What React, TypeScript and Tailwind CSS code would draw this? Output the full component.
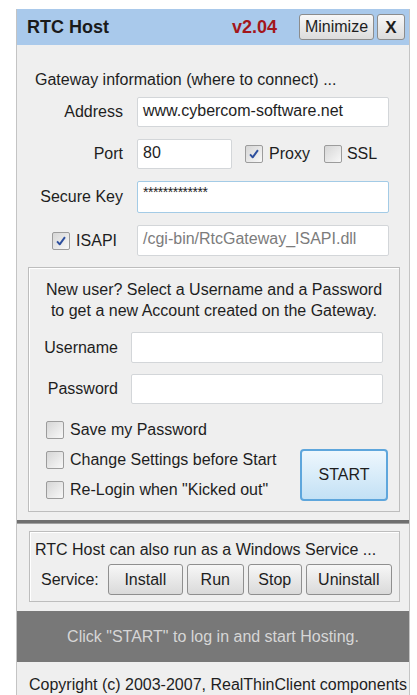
import React from "react";

const ui = "font-['Liberation_Sans',Arial,sans-serif]";

function CheckBox({ checked = false }: { checked?: boolean }) {
  return (
    <span className="flex h-[18px] w-[18px] shrink-0 items-center justify-center rounded-[2px] border border-[#9c9c9c] bg-linear-to-br from-[#d6d6d6] to-[#f8f8f8]">
      {checked && (
        <svg viewBox="0 0 16 16" className="h-[14px] w-[14px]">
          <path
            d="M3.5 8.5 6.5 11.8 12.5 3.5"
            fill="none"
            stroke="#2d4f9e"
            strokeWidth="2.2"
            strokeLinejoin="round"
          />
        </svg>
      )}
    </span>
  );
}

function Field({
  w = "w-[252px]",
  h = "h-[30px]",
  focus = false,
  muted = false,
  children,
}: {
  w?: string;
  h?: string;
  focus?: boolean;
  muted?: boolean;
  children?: React.ReactNode;
}) {
  return (
    <div
      className={`${w} ${h} flex shrink-0 items-center rounded-[2px] border bg-white px-[5px] pb-[3px] text-[16px] ${
        focus ? "border-[#a3cbe6]" : "border-[#d3d6d9]"
      } ${muted ? "text-[#7c7c7c]" : "text-[#1e1e1e]"}`}
    >
      {children}
    </div>
  );
}

function Btn({ w, children }: { w: string; children: React.ReactNode }) {
  return (
    <button
      className={`${w} h-[31px] shrink-0 rounded-[3px] border border-[#8f8f8f] bg-linear-to-b from-[#f7f7f7] to-[#dadada] text-[16px] text-[#1e1e1e]`}
    >
      {children}
    </button>
  );
}

function Row({ label, children }: { label: React.ReactNode; children: React.ReactNode }) {
  return (
    <div className="flex items-center">
      <div className="flex w-[106px] justify-end">{label}</div>
      <div className="ml-[14px] flex items-center">{children}</div>
    </div>
  );
}

export default function App() {
  return (
    <div className={`min-h-screen bg-white pt-[9px] ${ui} text-[#1e1e1e]`}>
      <div className="ml-[16px] w-[394px] border-x border-[#c4c4c4] bg-[#efefef] pb-[2px]">
        {/* title bar */}
        <div className="flex h-[36px] items-center bg-[#a9c9eb] pl-[10px] pr-[4px]">
          <span className="flex-1 text-[18px] font-bold text-[#1a1a1a]">RTC Host</span>
          <span className="mr-[22px] text-[18px] font-bold text-[#a3161b]">v2.04</span>
          <button className="h-[26px] w-[75px] rounded-[3px] border border-[#8c8c8c] bg-linear-to-b from-[#f8f8f8] to-[#dcdcdc] text-[16px]">
            Minimize
          </button>
          <button className="ml-[3px] h-[26px] w-[28px] rounded-[3px] border border-[#8c8c8c] bg-linear-to-b from-[#f8f8f8] to-[#dcdcdc] text-[17px] font-bold">
            X
          </button>
        </div>

        {/* gateway settings */}
        <div className="mt-[25px] pl-[18px] text-[16px] leading-[20px]">
          Gateway information (where to connect) ...
        </div>
        <div className="mt-[7px] flex flex-col gap-[12px] text-[16px]">
          <Row label="Address">
            <Field>www.cybercom-software.net</Field>
          </Row>
          <Row label="Port">
            <Field w="w-[95px]">80</Field>
            <span className="ml-[13px]">
              <CheckBox checked />
            </span>
            <span className="ml-[6px]">Proxy</span>
            <span className="ml-[14px]">
              <CheckBox />
            </span>
            <span className="ml-[5px]">SSL</span>
          </Row>
          <Row label="Secure Key">
            <Field h="h-[32px]" focus>
              <span className="-mt-[6px] text-[14px] tracking-[-0.5px]">*************</span>
            </Field>
          </Row>
          <Row
            label={
              <span className="flex items-center gap-[6px] pr-[6px]">
                <CheckBox checked />
                ISAPI
              </span>
            }
          >
            <Field h="h-[31px]" muted>
              /cgi-bin/RtcGateway_ISAPI.dll
            </Field>
          </Row>
        </div>

        {/* account group */}
        <div className="ml-[11px] mr-[9px] mt-[11px] border border-[#bdbdbd] pb-[6px] shadow-[inset_1px_1px_0_#ffffff]">
          <div className="pt-[11px] text-center text-[16px] leading-[21px]">
            <div>New user? Select a Username and a Password</div>
            <div>to get a new Account created on the Gateway.</div>
          </div>
          <div className="mt-[11px] flex flex-col gap-[11px] text-[16px]">
            <div className="flex items-center">
              <div className="w-[89px] text-right">Username</div>
              <div className="ml-[13px]">
                <Field h="h-[31px]" />
              </div>
            </div>
            <div className="flex items-center">
              <div className="w-[89px] text-right">Password</div>
              <div className="ml-[13px]">
                <Field />
              </div>
            </div>
          </div>
          <div className="mt-[11px] flex items-start">
            <div className="ml-[17px] flex flex-1 flex-col text-[16px]">
              {["Save my Password", "Change Settings before Start", 'Re-Login when "Kicked out"'].map(
                (t) => (
                  <div key={t} className="flex h-[30px] items-center gap-[6px]">
                    <CheckBox />
                    <span>{t}</span>
                  </div>
                )
              )}
            </div>
            <button className="mr-[11px] mt-[34px] h-[52px] w-[88px] rounded-[4px] border-2 border-[#5ea6dc] bg-linear-to-b from-[#eef7fd] to-[#c3e1f5] text-[16px]">
              START
            </button>
          </div>
        </div>

        {/* divider */}
        <div className="mt-[8px] h-[4px] border-b border-[#a0a0a0] bg-[#6f6f6f]" />

        {/* service group */}
        <div className="ml-[12px] mr-[9px] mt-[7px] border border-[#bdbdbd] pb-[6px] shadow-[inset_1px_1px_0_#ffffff]">
          <div className="pl-[5px] pt-[8px] text-[16px] leading-[20px]">
            RTC Host can also run as a Windows Service ...
          </div>
          <div className="mt-[4px] flex items-center text-[16px]">
            <span className="ml-[11px] mr-[9px]">Service:</span>
            <div className="flex gap-[4px]">
              <Btn w="w-[75px]">Install</Btn>
              <Btn w="w-[57px]">Run</Btn>
              <Btn w="w-[54px]">Stop</Btn>
              <Btn w="w-[86px]">Uninstall</Btn>
            </div>
          </div>
        </div>

        {/* status bar */}
        <div className="mt-[9px] flex h-[51px] items-center justify-center bg-[#787878] text-[16px] text-[#d6d6d6]">
          Click "START" to log in and start Hosting.
        </div>

        <div className="mt-[13px] pl-[12px] text-[16px] leading-[20px]">
          Copyright (c) 2003-2007, RealThinClient components
        </div>
      </div>
    </div>
  );
}
